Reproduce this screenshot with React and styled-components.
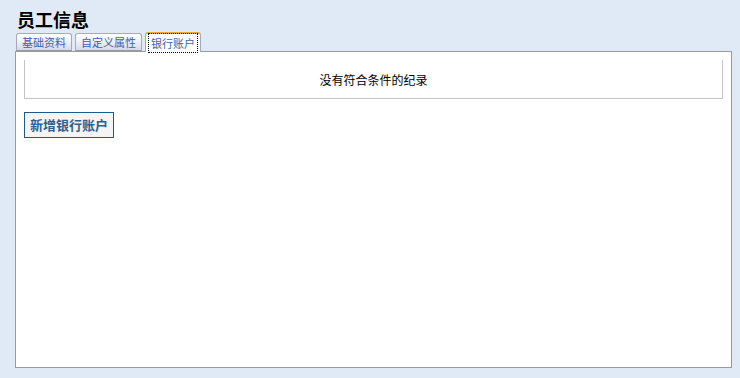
import React from "react";
import styled, { createGlobalStyle } from "styled-components";

const Global = createGlobalStyle`
  html, body { margin: 0; padding: 0; }
  body {
    background: #dfeaf6;
    font-family: "Liberation Sans", "Noto Sans CJK SC", sans-serif;
    width: 740px;
    height: 378px;
    overflow: hidden;
  }
`;

const Page = styled.div`
  padding: 8px 8px 0 15px;
  width: 717px;
`;

const Title = styled.h1`
  margin: 0 0 0 2px;
  font-family: "Noto Sans CJK SC", sans-serif;
  font-size: 18px;
  font-weight: bold;
  line-height: 23px;
  height: 23px;
  color: #000;
`;

const TabBar = styled.div`
  display: flex;
  align-items: flex-end;
  gap: 3px;
  height: 20px;
  padding-left: 1px;
  position: relative;
  z-index: 1;
`;

const Tab = styled.div`
  box-sizing: border-box;
  height: ${(p) => (p.$active ? "20px" : "18px")};
  padding: 0 5px;
  border: 1px solid #a7a9b9;
  border-bottom: ${(p) => (p.$active ? "none" : "1px solid #999")};
  border-top: ${(p) => (p.$active ? "2px solid #f2a62a" : "1px solid #a7a9b9")};
  border-radius: 3px 3px 0 0;
  background: ${(p) =>
    p.$active ? "#fff" : "linear-gradient(#ffffff, #f2f3f8 40%, #d6d9e8)"};
  font-family: "Noto Sans CJK SC", sans-serif;
  font-size: 11px;
  color: #3d5fae;
  display: flex;
  align-items: center;
  margin-bottom: ${(p) => (p.$active ? "-1px" : "0")};
`;

const TabLabel = styled.span`
  display: block;
  line-height: 14px;
  outline: ${(p) => (p.$focus ? "1px dotted #000" : "none")};
  outline-offset: 2px;
`;

const Panel = styled.div`
  box-sizing: border-box;
  width: 717px;
  height: 317px;
  background: #fff;
  border: 1px solid #9a9a9a;
  padding: 8px;
`;

const EmptyTable = styled.div`
  box-sizing: border-box;
  height: 39px;
  border: 1px solid #c4c4c4;
  border-top: none;
  display: flex;
  align-items: center;
  justify-content: center;
  font-family: "Noto Sans CJK SC", sans-serif;
  font-size: 12px;
  color: #000;
`;

const AddButton = styled.button`
  display: block;
  box-sizing: border-box;
  margin-top: 13px;
  width: 90px;
  height: 26px;
  border: 1px solid #1c5a88;
  background: #f4f4f4;
  color: #2f5f8f;
  font-family: "Noto Sans CJK SC", sans-serif;
  font-size: 13px;
  font-weight: bold;
  line-height: 24px;
  padding: 0;
  cursor: pointer;
`;

const tabs = ["基础资料", "自定义属性", "银行账户"];

export default function App() {
  return (
    <>
      <Global />
      <Page>
        <Title>员工信息</Title>
        <TabBar>
          {tabs.map((t, i) => (
            <Tab key={t} $active={i === 2}>
              <TabLabel $focus={i === 2}>{t}</TabLabel>
            </Tab>
          ))}
        </TabBar>
        <Panel>
          <EmptyTable>没有符合条件的纪录</EmptyTable>
          <AddButton>新增银行账户</AddButton>
        </Panel>
      </Page>
    </>
  );
}
